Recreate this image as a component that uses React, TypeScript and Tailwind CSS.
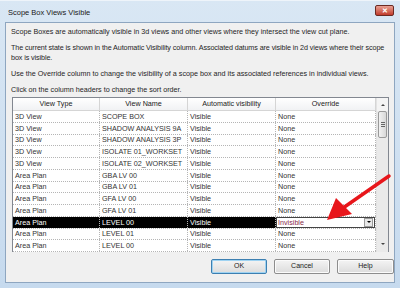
import React from "react";

const rows: [string, string][] = [
  ["3D View", "SCOPE BOX"],
  ["3D View", "SHADOW ANALYSIS 9A"],
  ["3D View", "SHADOW ANALYSIS 3P"],
  ["3D View", "ISOLATE 01_WORKSET"],
  ["3D View", "ISOLATE 02_WORKSET"],
  ["Area Plan", "GBA LV 00"],
  ["Area Plan", "GBA LV 01"],
  ["Area Plan", "GFA LV 00"],
  ["Area Plan", "GFA LV 01"],
  ["Area Plan", "LEVEL 00"],
  ["Area Plan", "LEVEL 01"],
  ["Area Plan", "LEVEL 00"],
];

function Row({ type, name, selected }: { type: string; name: string; selected?: boolean }) {
  const cell = "h-full flex items-center pl-[2px] border-r border-dotted border-[#b5b5b5] truncate";
  const sel = selected ? "bg-black text-white" : "";
  return (
    <div className="flex h-[11.75px] border-b border-dotted border-[#b5b5b5] text-[7.2px] leading-none text-[#333]">
      <div className={`${cell} ${sel} w-[87px]`}>{type}</div>
      <div className={`${cell} ${sel} w-[88px]`}>{name}</div>
      <div className={`${cell} ${sel} w-[88px]`}>Visible</div>
      {selected ? (
        <div className="w-[100px] h-full flex items-center border-r border-dotted border-[#b5b5b5]">
          <div className="w-full h-full flex items-center justify-between border border-[#444] bg-white">
            <span className="pl-[1px] text-[#8a2a4a]">Invisible</span>
            <div className="w-[9px] h-[9px] mr-[1px] flex items-center justify-center border border-[#9a9a9a] bg-[#e8e8e8]">
              <div className="w-0 h-0 border-l-[2px] border-r-[2px] border-t-[2px] border-l-transparent border-r-transparent border-t-black" />
            </div>
          </div>
        </div>
      ) : (
        <div className={`${cell} w-[100px]`}>None</div>
      )}
    </div>
  );
}

function Button({ label, focus, w }: { label: string; focus?: boolean; w: string }) {
  return (
    <div
      className={`${w} h-[15px] flex items-center justify-center rounded-[2px] border text-[7px] text-[#222] bg-gradient-to-b from-[#f4f4f4] to-[#dcdcdc] ${
        focus ? "border-[#3c7fb1] shadow-[inset_0_0_0_1px_#9fd3f2]" : "border-[#8d8d8d] shadow-[inset_0_0_0_1px_#fbfbfb]"
      }`}
    >
      {label}
    </div>
  );
}

export default function App() {
  return (
    <div className="relative w-[400px] h-[288px] overflow-hidden bg-gradient-to-b from-[#d9e7f4] to-[#c6daee] font-['Liberation_Sans',Arial,sans-serif] text-black">
      {/* title bar */}
      <div className="flex h-[22px] items-center justify-between pl-[8px] pr-[6px] border-t border-[#eef4fa]">
        <span className="mt-[2px] text-[7.5px] text-[#1a1a1a]">Scope Box Views Visible</span>
        <div className="mb-[2px] w-[19px] h-[11px] rounded-[2px] border border-[#6b2a22] bg-gradient-to-b from-[#e8a093] to-[#c0392b] flex items-center justify-center text-white text-[7px] font-bold leading-none">
          ✕
        </div>
      </div>

      {/* client area */}
      <div className="mx-[5px] h-[261px] border border-[#8ea6c0] bg-[#f0f0f0] pl-[5px] pt-[4px]">
        <div className="text-[7.2px] leading-[10px] text-[#1e1e1e]">
          <p className="mb-[6px]">
            Scope Boxes are automatically visible in 3d views and other views where they intersect the view cut plane.
          </p>
          <p className="mb-[6px] whitespace-nowrap tracking-[-0.1px]">
            The current state is shown in the Automatic Visibility column. Associated datums are visible in 2d views where their scope
            <br />
            box is visible.
          </p>
          <p className="mb-[6px]">
            Use the Override column to change the visibility of a scope box and its associated references in individual views.
          </p>
          <p>Click on the column headers to change the sort order.</p>
        </div>

        {/* table */}
        <div className="mt-[2px] ml-[1px] flex w-[377px] h-[155px] border-l border-t border-r border-[#828790] bg-white overflow-hidden">
          <div className="w-[363px]">
            <div className="flex h-[13px] bg-gradient-to-b from-white to-[#f1f2f4] border-b border-[#d5d5d5] text-[7.2px] text-[#222]">
              <div className="w-[87px] flex items-center justify-center border-r border-[#d5d5d5]">View Type</div>
              <div className="w-[88px] flex items-center justify-center border-r border-[#d5d5d5]">View Name</div>
              <div className="w-[88px] flex items-center justify-center border-r border-[#d5d5d5]">Automatic visibility</div>
              <div className="w-[100px] flex items-center justify-center border-r border-[#d5d5d5]">Override</div>
            </div>
            {rows.map(([t, n], i) => (
              <Row key={i} type={t} name={n} selected={i === 9} />
            ))}
          </div>
          {/* scrollbar */}
          <div className="w-[13px] flex flex-col bg-[#eaeaea] border-l border-[#e3e3e3]">
            <div className="h-[13px] flex items-center justify-center bg-[#f4f4f4]">
              <div className="w-0 h-0 border-l-[2px] border-r-[2px] border-b-[2px] border-l-transparent border-r-transparent border-b-[#444]" />
            </div>
            <div className="mx-[1px] h-[27px] rounded-[2px] border border-[#9a9a9a] bg-gradient-to-r from-[#f2f2f2] to-[#d8d8d8] flex flex-col items-center justify-center gap-[1px]">
              <div className="w-[4px] h-[1px] bg-[#666]" />
              <div className="w-[4px] h-[1px] bg-[#666]" />
              <div className="w-[4px] h-[1px] bg-[#666]" />
            </div>
            <div className="flex-1" />
            <div className="h-[13px] flex items-start justify-center pt-[4px]">
              <div className="w-0 h-0 border-l-[2px] border-r-[2px] border-t-[2px] border-l-transparent border-r-transparent border-t-[#444]" />
            </div>
          </div>
        </div>

        {/* buttons */}
        <div className="mt-[7px] flex justify-end gap-[7px] w-[383px]">
          <Button label="OK" focus w="w-[56px]" />
          <Button label="Cancel" w="w-[56px]" />
          <Button label="Help" w="w-[57px]" />
        </div>
      </div>

      {/* red arrow annotation */}
      <svg className="absolute left-0 top-0" width="400" height="288" viewBox="0 0 400 288">
        <line x1="389" y1="176" x2="343" y2="208" stroke="#e8161b" strokeWidth="3.5" strokeLinecap="round" />
        <polygon points="327,220 336,198 352,214" fill="#e8161b" />
      </svg>
    </div>
  );
}
